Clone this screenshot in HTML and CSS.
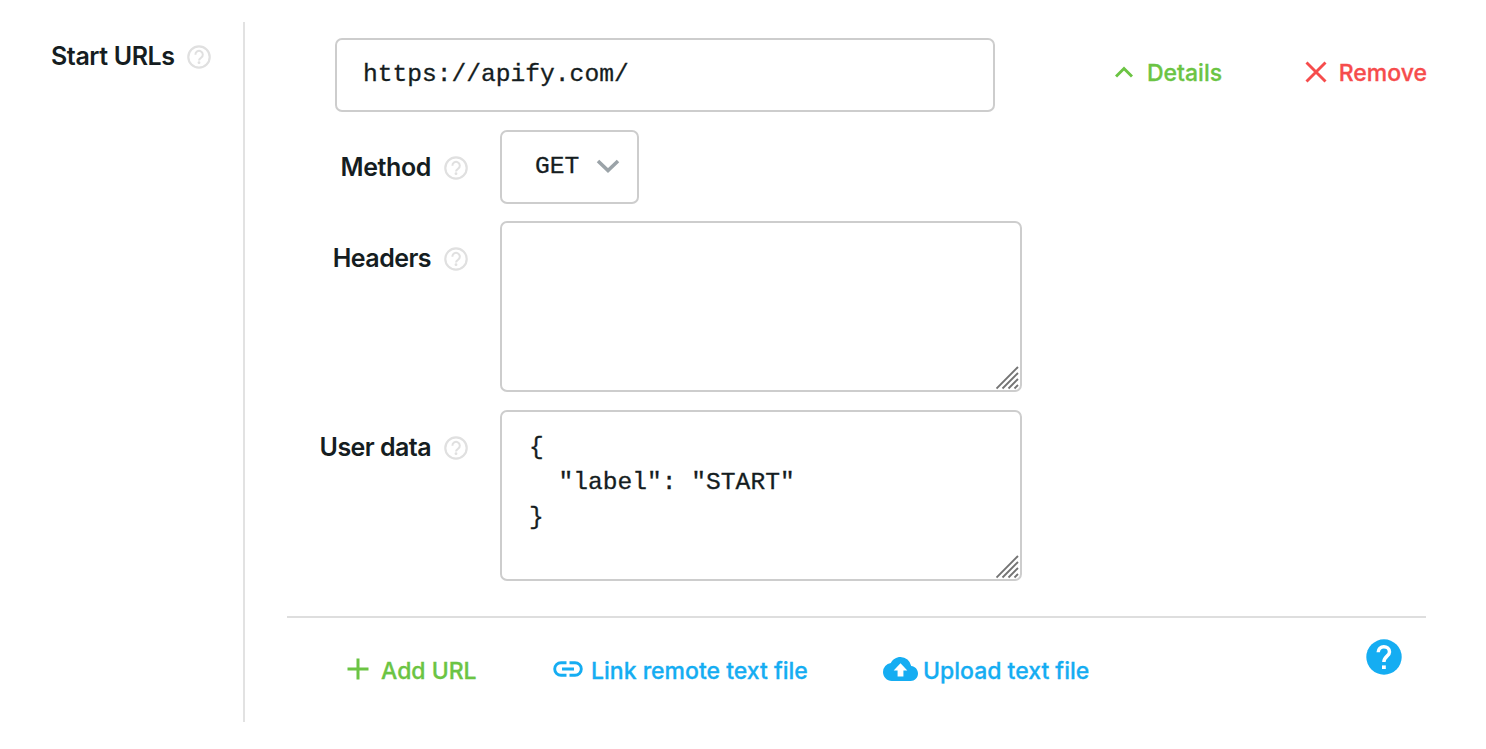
FILE: index.html
```html
<!DOCTYPE html>
<html lang="en">
<head>
<meta charset="utf-8">
<title>Start URLs</title>
<link rel="stylesheet" href="styles.css">
</head>
<body>
<svg width="0" height="0" class="defs">
  <symbol id="hint" viewBox="0 0 24 24">
    <circle cx="12" cy="12" r="10.7" fill="none" stroke="currentColor" stroke-width="2.200"/>
    <path d="M8.400 9.700a3.700 3.700 0 1 1 5.700 3c-1.300.9-2.100 1.400-2.100 2.700" fill="none" stroke="currentColor" stroke-width="2"/>
    <circle cx="12" cy="17.700" r="1.400" fill="currentColor"/>
  </symbol>
  <symbol id="grip" viewBox="0 0 24 24">
    <path d="M.5 22.500 22 1M6.500 22.500 22 7M12.500 22.500 22 13M18.500 22.500 22 19" fill="none" stroke="#747474" stroke-width="1.900"/>
  </symbol>
</svg>
<div class="field">
  <div class="field-label">
    <span class="label start">Start URLs</span>
    <svg class="hint"><use href="#hint"/></svg>
  </div>
  <div class="editor">
    <div class="url-row">
      <div class="box url">https://apify.com/</div>
      <a class="action green details">
        <svg width="18" height="12" viewBox="0 0 18 12"><path d="M1 10.500 9 2.500l8 8" fill="none" stroke="currentColor" stroke-width="3"/></svg>
        <span>Details</span>
      </a>
      <a class="action red remove">
        <svg width="22" height="22" viewBox="0 0 22 22"><path d="M1.500 1.500l19 19M20.500 1.500l-19 19" fill="none" stroke="currentColor" stroke-width="2.900"/></svg>
        <span>Remove</span>
      </a>
    </div>
    <div class="row">
      <div class="row-label"><span class="label method">Method</span><svg class="hint"><use href="#hint"/></svg></div>
      <div class="box select">
        <span>GET</span>
        <svg width="24" height="16" viewBox="0 0 24 16"><path d="M2 3l10 9.500L22 3" fill="none" stroke="#9ba3a8" stroke-width="3.600"/></svg>
      </div>
    </div>
    <div class="row">
      <div class="row-label"><span class="label headers">Headers</span><svg class="hint"><use href="#hint"/></svg></div>
      <div class="box area"><svg class="grip"><use href="#grip"/></svg></div>
    </div>
    <div class="row">
      <div class="row-label"><span class="label user">User data</span><svg class="hint"><use href="#hint"/></svg></div>
      <div class="box area"><pre>{
  "label": "START"
}</pre><svg class="grip"><use href="#grip"/></svg></div>
    </div>
    <div class="footer">
      <a class="action green add">
        <svg width="22" height="22" viewBox="0 0 22 22"><path d="M11 .5v21M.5 11h21" fill="none" stroke="currentColor" stroke-width="3"/></svg>
        <span>Add URL</span>
      </a>
      <a class="action blue link">
        <svg width="30" height="16" viewBox="0 0 30 16"><path d="M13.500 1.700H8a6.300 6.300 0 0 0 0 12.600h5.500M16.500 1.700H22a6.300 6.300 0 0 1 0 12.600h-5.500M9 8h12" fill="none" stroke="currentColor" stroke-width="2.900"/></svg>
        <span>Link remote text file</span>
      </a>
      <a class="action blue upload">
        <svg width="35" height="24" viewBox="0 0 24 16" preserveAspectRatio="none"><path d="M19.350 6.040A7.490 7.490 0 0 0 12 0C9.110 0 6.600 1.640 5.350 4.040A5.994 5.994 0 0 0 0 10c0 3.310 2.690 6 6 6h13c2.760 0 5-2.240 5-5 0-2.640-2.050-4.780-4.650-4.960z" fill="currentColor"/><path d="M14 9v4h-4V9H7.300L12 4.200 16.700 9z" fill="#fff"/></svg>
        <span>Upload text file</span>
      </a>
      <a class="help"><svg width="36" height="36" viewBox="0 0 36 36"><circle cx="18" cy="18" r="17.700" fill="currentColor"/><path d="M12.200 13.300c0-3.500 2.600-5.600 5.600-5.600s5.700 2.100 5.700 5.200c0 4.300-5.600 4.300-5.600 10.100" fill="none" stroke="#fff" stroke-width="3.500"/><path d="M16 26.400h3.800V30H16z" fill="#fff"/></svg></a>
    </div>
  </div>
</div>
</body>
</html>
```
FILE: styles.css
```css
* { box-sizing: border-box; }
body { margin: 0; background: #fff; color: #151d21; font-family: Inter, "Liberation Sans", sans-serif; }
svg { display: block; flex: none; }
.defs { display: none; }
.field { display: grid; grid-template-columns: 243px 1183px; padding-top: 22px; }
.field-label { display: flex; align-items: center; gap: 13px; height: 70px; padding-left: 51px; }
.label { font-size: 25px; font-weight: 600; line-height: 30px; white-space: nowrap; position: relative; top: -1px; }
.start { width: 123px; letter-spacing: -0.4px; }
.method { letter-spacing: -0.4px; }
.headers, .user { letter-spacing: -0.55px; }
.hint { width: 24px; height: 24px; color: #e0e0e0; }
.editor { height: 700px; border-left: 2px solid #e2e2e2; padding: 16px 0 0 42px; }
.box { border: 2px solid #cdcdcd; border-radius: 7px; font-family: "Liberation Mono", monospace; font-size: 24.600px; line-height: 35px; -webkit-text-stroke: 0.3px currentColor; }
.url-row { display: flex; align-items: center; padding-left: 48px; height: 74px; }
.url { width: 660px; height: 74px; padding: 17px 26px; }
.action { display: flex; align-items: center; font-size: 23px; font-weight: 500; line-height: 30px; white-space: nowrap; -webkit-text-stroke: 0.3px currentColor; }
.green { color: #6bc443; }
.red { color: #f64c4c; }
.blue { color: #15adf2; }
.details { margin-left: 120px; gap: 14px; }
.remove { margin-left: auto; gap: 12px; margin-right: -1px; }
.url-row .action { padding-bottom: 4px; }
.url-row .action svg { margin-bottom: 3px; }
.row { display: grid; grid-template-columns: 181px auto; column-gap: 32px; justify-content: start; margin-top: 18px; }
.row-label { display: flex; align-items: center; justify-content: flex-end; gap: 13px; height: 76px; }
.row:nth-child(2) { height: 73px; }
.select { display: flex; align-items: center; gap: 17px; width: 139px; height: 74px; padding: 0 0 2px 33px; }
.area { position: relative; width: 522px; height: 171px; padding: 18px 27px; }
.area pre { margin: 0; font: inherit; }
.grip { position: absolute; right: 0; bottom: 0; width: 24px; height: 24px; }
.footer { display: flex; margin-top: 35px; border-top: 2px solid #dedede; height: 104px; padding-top: 38px; align-items: flex-start; }
.footer .action { height: 30px; }
.footer .action svg { margin-bottom: 4px; }
.add { margin-left: 60px; gap: 12px; width: 206px; }
.link { gap: 8px; width: 330px; }
.upload { gap: 5px; }
.help { margin: -17px 24px 0 auto; color: #15adf2; }
```
